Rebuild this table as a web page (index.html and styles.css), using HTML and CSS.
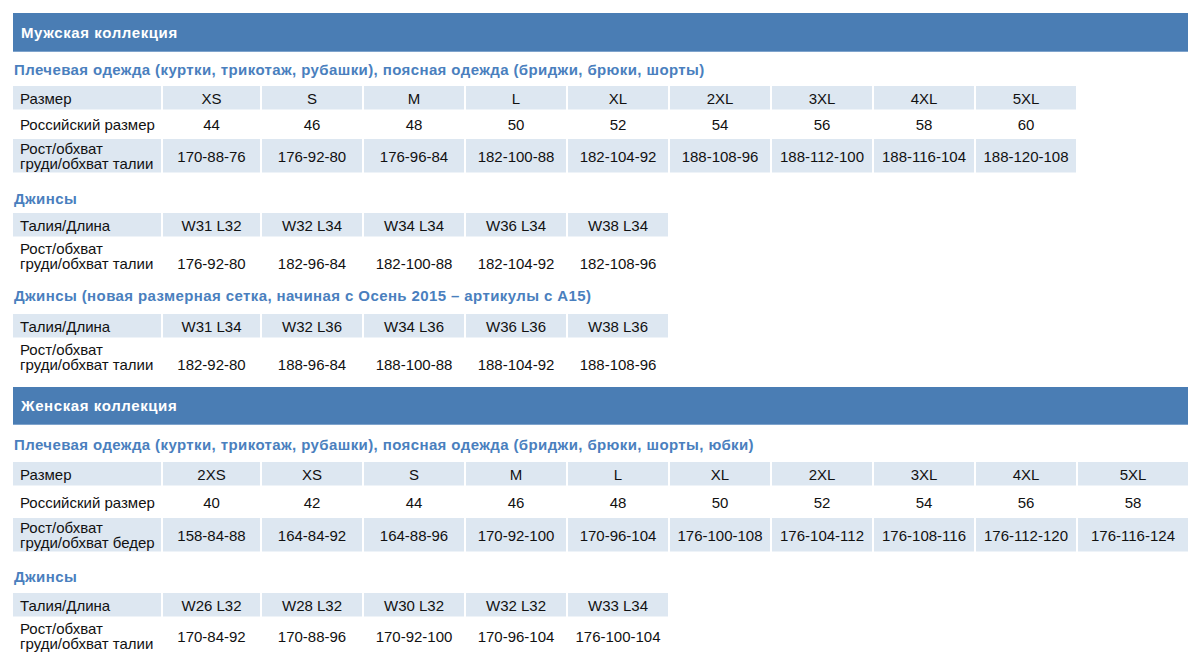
FILE: index.html
```html
<!DOCTYPE html>
<html lang="ru">
<head>
<meta charset="utf-8">
<title>Размерная сетка</title>
<link rel="stylesheet" href="styles.css">
</head>
<body>
<div class="page">
  <div class="bar">Мужская коллекция</div>
  <div class="title t1">Плечевая одежда (куртки, трикотаж, рубашки), поясная одежда (бриджи, брюки, шорты)</div>
  <div class="grid g9 rows3m">
    <div class="c lab sh">Размер</div>
    <div class="c sh">XS</div><div class="c sh">S</div><div class="c sh">M</div><div class="c sh">L</div><div class="c sh">XL</div><div class="c sh">2XL</div><div class="c sh">3XL</div><div class="c sh">4XL</div><div class="c sh">5XL</div>
    <div class="c lab">Российский размер</div>
    <div class="c">44</div><div class="c">46</div><div class="c">48</div><div class="c">50</div><div class="c">52</div><div class="c">54</div><div class="c">56</div><div class="c">58</div><div class="c">60</div>
    <div class="c lab sh">Рост/обхват<br>груди/обхват талии</div>
    <div class="c sh">170-88-76</div><div class="c sh">176-92-80</div><div class="c sh">176-96-84</div><div class="c sh">182-100-88</div><div class="c sh">182-104-92</div><div class="c sh">188-108-96</div><div class="c sh">188-112-100</div><div class="c sh">188-116-104</div><div class="c sh">188-120-108</div>
  </div>

  <div class="title t2">Джинсы</div>
  <div class="grid g5 rows2">
    <div class="c lab sh">Талия/Длина</div>
    <div class="c sh">W31 L32</div><div class="c sh">W32 L34</div><div class="c sh">W34 L34</div><div class="c sh">W36 L34</div><div class="c sh">W38 L34</div>
    <div class="c lab">Рост/обхват<br>груди/обхват талии</div>
    <div class="c low">176-92-80</div><div class="c low">182-96-84</div><div class="c low">182-100-88</div><div class="c low">182-104-92</div><div class="c low">182-108-96</div>
  </div>

  <div class="title t3">Джинсы (новая размерная сетка, начиная с Осень 2015 – артикулы с А15)</div>
  <div class="grid g5 rows2">
    <div class="c lab sh">Талия/Длина</div>
    <div class="c sh">W31 L34</div><div class="c sh">W32 L36</div><div class="c sh">W34 L36</div><div class="c sh">W36 L36</div><div class="c sh">W38 L36</div>
    <div class="c lab">Рост/обхват<br>груди/обхват талии</div>
    <div class="c low">182-92-80</div><div class="c low">188-96-84</div><div class="c low">188-100-88</div><div class="c low">188-104-92</div><div class="c low">188-108-96</div>
  </div>

  <div class="bar bar2">Женская коллекция</div>
  <div class="title t4">Плечевая одежда (куртки, трикотаж, рубашки), поясная одежда (бриджи, брюки, шорты, юбки)</div>
  <div class="grid g10 rows3w">
    <div class="c lab sh">Размер</div>
    <div class="c sh">2XS</div><div class="c sh">XS</div><div class="c sh">S</div><div class="c sh">M</div><div class="c sh">L</div><div class="c sh">XL</div><div class="c sh">2XL</div><div class="c sh">3XL</div><div class="c sh">4XL</div><div class="c sh">5XL</div>
    <div class="c lab">Российский размер</div>
    <div class="c">40</div><div class="c">42</div><div class="c">44</div><div class="c">46</div><div class="c">48</div><div class="c">50</div><div class="c">52</div><div class="c">54</div><div class="c">56</div><div class="c">58</div>
    <div class="c lab sh">Рост/обхват<br>груди/обхват бедер</div>
    <div class="c sh">158-84-88</div><div class="c sh">164-84-92</div><div class="c sh">164-88-96</div><div class="c sh">170-92-100</div><div class="c sh">170-96-104</div><div class="c sh">176-100-108</div><div class="c sh">176-104-112</div><div class="c sh">176-108-116</div><div class="c sh">176-112-120</div><div class="c sh">176-116-124</div>
  </div>

  <div class="title t5">Джинсы</div>
  <div class="grid g5 rows2">
    <div class="c lab sh">Талия/Длина</div>
    <div class="c sh">W26 L32</div><div class="c sh">W28 L32</div><div class="c sh">W30 L32</div><div class="c sh">W32 L32</div><div class="c sh">W33 L34</div>
    <div class="c lab">Рост/обхват<br>груди/обхват талии</div>
    <div class="c">170-84-92</div><div class="c">170-88-96</div><div class="c">170-92-100</div><div class="c">170-96-104</div><div class="c">176-100-104</div>
  </div>
</div>
</body>
</html>
```

FILE: styles.css
```css
html, body {
  margin: 0;
  padding: 0;
  background: #ffffff;
}
body {
  font-family: "Liberation Sans", Arial, sans-serif;
  color: #111111;
}
.page {
  padding: 13px 12px 0 13px;
  width: 1175px;
}
.bar {
  height: 39px;
  line-height: 39px;
  background: #4a7db4;
  color: #ffffff;
  font-weight: bold;
  font-size: 15px;
  letter-spacing: 0.6px;
  padding-left: 8px;
  box-shadow: inset 0 -1px 0 #7ea3cc;
}
.bar2 {
  margin-top: 13px;
  height: 38px;
  line-height: 38px;
}
.title {
  color: #4a7fbe;
  font-weight: bold;
  font-size: 15px;
  line-height: 18px;
  letter-spacing: 0.4px;
  padding-left: 1px;
}
.t1 { padding-top: 9px; padding-bottom: 7px; }
.t2 { padding-top: 17px; padding-bottom: 5px; }
.t3 { padding-top: 14px; padding-bottom: 9px; }
.t4 { padding-top: 11px; padding-bottom: 8px; }
.t5 { padding-top: 16px; padding-bottom: 7px; }

.grid {
  display: grid;
  column-gap: 2px;
  row-gap: 2px;
}
.g9 { grid-template-columns: 148px 97px repeat(8, 100px); }
.g10 { grid-template-columns: 148px 97px repeat(8, 100px) 110px; }
.g5 { grid-template-columns: 148px 97px repeat(4, 100px); }
.rows3m { grid-template-rows: 24px 25px 34px; }
.rows3w { grid-template-rows: 24px 28px 34px; }
.rows2 { grid-template-rows: 24px 34px; }

.c {
  display: flex;
  align-items: center;
  justify-content: center;
  font-size: 15px;
  line-height: 15px;
  text-align: center;
  white-space: nowrap;
}
.sh {
  background: #dde7f1;
  box-shadow: inset 0 -1px 0 #eef3f8;
}
.lab {
  justify-content: flex-start;
  text-align: left;
  padding-left: 7px;
}
.low {
  align-items: flex-end;
  padding-bottom: 2px;
}
```
